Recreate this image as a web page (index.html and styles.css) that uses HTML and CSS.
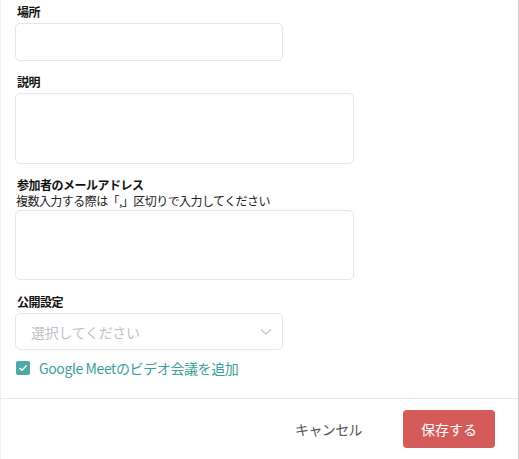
FILE: index.html
```html
<!DOCTYPE html>
<html lang="ja">
<head>
    <meta charset="UTF-8">
    <meta name="viewport" content="width=device-width, initial-scale=1.0">
    <title>予定の編集</title>
    <link rel="stylesheet" href="styles.css">
</head>
<body>
    <div class="panel">
        <form class="form">
            <div class="field first">
                <label class="label" for="place">場所</label>
                <input class="input short" type="text" id="place">
            </div>

            <div class="field">
                <label class="label" for="desc">説明</label>
                <textarea class="input wide desc" id="desc"></textarea>
            </div>

            <div class="field">
                <label class="label" for="mails">参加者のメールアドレス</label>
                <div class="hint">複数入力する際は「,」区切りで入力してください</div>
                <textarea class="input wide mails" id="mails"></textarea>
            </div>

            <div class="field scope">
                <label class="label" for="scope">公開設定</label>
                <div class="select short">
                    <span class="placeholder">選択してください</span>
                    <svg class="chevron" width="12" height="8" viewBox="0 0 12 8">
                        <path d="M1 1.5 L6 6 L11 1.5" fill="none" stroke="#c4c4c4" stroke-width="1.2"/>
                    </svg>
                </div>
            </div>

            <label class="check">
                <span class="box">
                    <svg width="10" height="8" viewBox="0 0 10 8">
                        <path d="M1.5 4 L4 6.3 L8.5 1.5" fill="none" stroke="#fff" stroke-width="1.5"/>
                    </svg>
                </span>
                <span class="check-text">Google Meetのビデオ会議を追加</span>
            </label>
        </form>

        <div class="footer">
            <button type="button" class="cancel">キャンセル</button>
            <button type="button" class="save">保存する</button>
        </div>
    </div>
</body>
</html>
```

FILE: styles.css
```css
body {
    margin: 0;
    background-color: #fff;
    font-family: "Noto Sans CJK JP", "Noto Sans", sans-serif;
    color: #222;
}

.panel {
    width: 519px;
    height: 459px;
    border-right: 1px solid #cfcfcf;
    border-left: 1px solid #f2f2f5;
    box-sizing: border-box;
    display: flex;
    flex-direction: column;
}

.form {
    display: flex;
    flex-direction: column;
    margin: 0;
    padding: 0 0 0 14px;
    height: 398px;
    flex-shrink: 0;
    box-sizing: border-box;
}

.field {
    display: flex;
    flex-direction: column;
    margin-top: 13px;
}

.field.first {
    margin-top: 4px;
}

.field.scope {
    margin-top: 14px;
}

.label {
    font-size: 12px;
    font-weight: bold;
    line-height: 16px;
    letter-spacing: -0.5px;
    margin: 0 0 3px 2px;
    color: #111;
}

.hint {
    font-size: 12px;
    line-height: 15px;
    letter-spacing: -0.55px;
    margin: -3px 0 2px 1px;
    color: #222;
}

.input {
    border: 1px solid #e6e6ea;
    border-radius: 5px;
    box-sizing: border-box;
    font-family: inherit;
    resize: none;
    outline: none;
    display: block;
    margin: 0;
}

.short {
    width: 268px;
}

.wide {
    width: 339px;
}

input.input {
    height: 38px;
}

.desc {
    height: 71px;
}

.mails {
    height: 70px;
}

.select {
    height: 37px;
    border: 1px solid #e6e6ea;
    border-radius: 5px;
    box-sizing: border-box;
    display: flex;
    align-items: center;
    justify-content: space-between;
    padding: 0 10px 0 15px;
}

.placeholder {
    font-size: 14px;
    letter-spacing: -0.3px;
    color: #c0c0c8;
}

.chevron {
    display: block;
}

.check {
    display: flex;
    align-items: center;
    gap: 9px;
    margin-top: 9px;
    margin-left: 1px;
}

.box {
    width: 14px;
    height: 14px;
    background-color: #4ea8a5;
    border-radius: 2px;
    display: flex;
    align-items: center;
    justify-content: center;
}

.check-text {
    font-size: 14px;
    letter-spacing: -0.4px;
    color: #3a9e9b;
    line-height: 18px;
}

.footer {
    border-top: 1px solid #e8e8e8;
    display: flex;
    justify-content: flex-end;
    align-items: center;
    gap: 41px;
    padding: 11px 23px 0 0;
}

button {
    font-family: inherit;
    font-size: 14px;
    border: none;
    cursor: pointer;
}

.cancel {
    background: none;
    color: #555;
    letter-spacing: -0.6px;
    padding: 0;
}

.save {
    background-color: #d55b5b;
    color: #fff;
    width: 92px;
    height: 38px;
    border-radius: 4px;
}
```
